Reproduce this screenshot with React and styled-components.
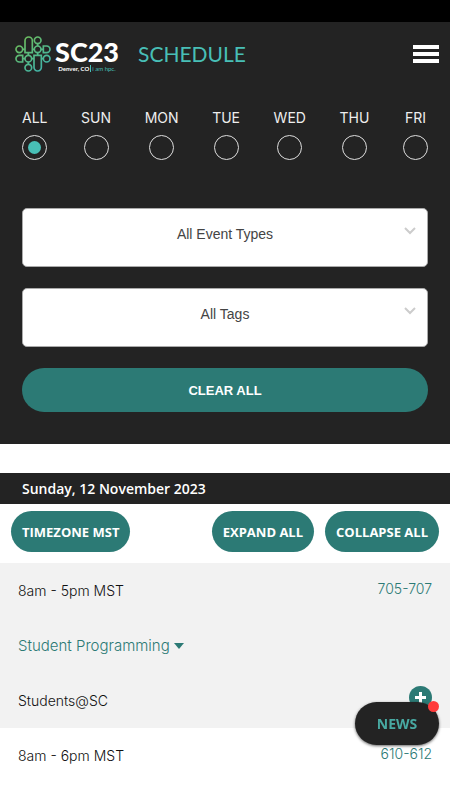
import React, { useState } from 'react';
import styled, { createGlobalStyle } from 'styled-components';

const GlobalStyle = createGlobalStyle`
  * {
    box-sizing: border-box;
  }
  body {
    margin: 0;
    background: #fff;
    color: #111;
    font-family: Inter, "Liberation Sans", sans-serif;
    font-size: 14px;
    font-weight: 300;
  }
`;

const StatusBar = styled.div`
  height: 22px;
  background: #000;
`;

const Panel = styled.div`
  background: #232323;
  padding-bottom: 32px;
`;

const Header = styled.header`
  display: flex;
  align-items: center;
  height: 64px;
  padding: 0 11px 0 15px;
`;

const Logo = styled.a`
  display: flex;
  align-items: center;
  gap: 4px;
  color: #fff;
  text-decoration: none;
`;

const LogoText = styled.span`
  display: flex;
  flex-direction: column;
  align-items: center;
  padding-top: 4px;
  font-family: Lato, sans-serif;
`;

const LogoName = styled.span`
  font-size: 27px;
  font-weight: 900;
  line-height: 26px;
`;

const LogoTag = styled.span`
  font-size: 6px;
  font-weight: 700;
  line-height: 8px;
  white-space: nowrap;
`;

const Accent = styled.span`
  margin-left: 1px;
  padding-left: 1px;
  border-left: 1px solid #48bfb6;
  color: #48bfb6;
  font-weight: 400;
`;

const Title = styled.h1`
  flex: 1;
  margin: 0 0 0 19px;
  color: #48bfb6;
  font-family: Lato, sans-serif;
  font-size: 21px;
  font-weight: 400;
  line-height: 28px;
`;

const MenuButton = styled.button`
  display: flex;
  flex-direction: column;
  gap: 3px;
  width: 26px;
  padding: 0;
  border: 0;
  background: none;
  cursor: pointer;
`;

const MenuLine = styled.span`
  height: 4px;
  background: #fff;
`;

const Filters = styled.form`
  display: flex;
  flex-direction: column;
  gap: 21px;
  padding: 22px 22px 0;
`;

const Days = styled.fieldset`
  display: flex;
  justify-content: space-between;
  margin: 0 0 27px;
  padding: 0;
  border: 0;
`;

const Day = styled.label`
  display: flex;
  flex-direction: column;
  align-items: center;
  gap: 7px;
  color: #eee;
  font-weight: 400;
  line-height: 20px;
  cursor: pointer;
`;

const Radio = styled.input`
  display: grid;
  place-items: center;
  appearance: none;
  width: 25px;
  height: 25px;
  margin: 0;
  border: 1px solid #ddd;
  border-radius: 50%;

  &:checked::before {
    content: "";
    width: 13px;
    height: 13px;
    border-radius: 50%;
    background: #48bfb6;
  }
`;

const SelectBox = styled.div`
  position: relative;
`;

const Select = styled.select`
  display: block;
  appearance: none;
  width: 100%;
  height: 59px;
  padding: 0 20px 8px;
  border: 1px solid #aaa;
  border-radius: 5px;
  background: #fff;
  color: #444;
  font-family: "Liberation Sans", sans-serif;
  font-size: 14px;
  text-align-last: center;
`;

const SelectArrow = styled.svg`
  position: absolute;
  top: 19px;
  right: 12px;
  pointer-events: none;
`;

const ClearButton = styled.button`
  height: 44px;
  border: 0;
  border-radius: 22px;
  background: #2c7a75;
  color: #fff;
  font-family: "Liberation Sans", sans-serif;
  font-size: 13px;
  font-weight: 700;
  cursor: pointer;
`;

const DateBar = styled.h2`
  margin: 29px 0 0;
  padding: 0 22px;
  background: #232323;
  color: #fff;
  font-family: "Open Sans", sans-serif;
  font-size: 14px;
  font-weight: 600;
  line-height: 31px;
`;

const Toolbar = styled.div`
  display: flex;
  gap: 11px;
  padding: 7px 11px 11px;
`;

const PillButton = styled.button`
  height: 41px;
  margin-right: ${(props) => (props.$push ? 'auto' : '0')};
  padding: 0 11px;
  border: 0;
  border-radius: 21px;
  background: #2c7a75;
  color: #fff;
  font-family: "Open Sans", sans-serif;
  font-size: 13px;
  font-weight: 700;
  white-space: nowrap;
  cursor: pointer;
`;

const Event = styled.article`
  padding: 0 18px;
  background: ${(props) => (props.$shaded ? '#f2f2f2' : '#fff')};
`;

const Line = styled.div`
  display: flex;
  align-items: center;
  justify-content: space-between;
  height: 55px;
`;

const Room = styled.a`
  padding-bottom: 4px;
  color: #2c7a75;
  text-decoration: none;
`;

const Category = styled.button`
  display: flex;
  align-items: center;
  gap: 4px;
  padding: 0;
  border: 0;
  background: none;
  color: #2c7a75;
  font: inherit;
  font-size: 15px;
  cursor: pointer;
`;

const EventName = styled.h3`
  margin: 0;
  font-size: 14px;
  font-weight: 300;
`;

const AddButton = styled.button`
  display: flex;
  align-self: flex-start;
  margin-top: 13px;
  padding: 0;
  border: 0;
  background: none;
  cursor: pointer;
`;

const NewsButton = styled.button`
  position: fixed;
  right: 11px;
  bottom: 55px;
  width: 84px;
  height: 43px;
  border: 0;
  border-radius: 22px;
  background: #232323;
  box-shadow: 0 1px 3px rgba(0, 0, 0, 0.6);
  color: #48a9a2;
  font-family: "Open Sans", sans-serif;
  font-size: 14px;
  font-weight: 700;
  cursor: pointer;
`;

const NewsDot = styled.span`
  position: absolute;
  top: -1px;
  right: 0;
  width: 11px;
  height: 11px;
  border-radius: 50%;
  background: #ff3b3b;
`;

const DAYS = ['ALL', 'SUN', 'MON', 'TUE', 'WED', 'THU', 'FRI'];

const EVENTS = [
  { time: '8am - 5pm MST', room: '705-707', category: 'Student Programming', name: 'Students@SC' },
  { time: '8am - 6pm MST', room: '610-612' },
];

function LogoMark() {
  return (
    <svg width="36" height="36" viewBox="0 0 108 108" fill="none" stroke="url(#mark)" strokeWidth="5" aria-hidden="true">
      <defs>
        <linearGradient id="mark" gradientUnits="userSpaceOnUse" x1="20" y1="10" x2="90" y2="100">
          <stop offset="0" stopColor="#6cbd5e" />
          <stop offset="1" stopColor="#3fb3ab" />
        </linearGradient>
      </defs>
      <path d="M30 50V14a11 11 0 0 1 22 0v36z" />
      <path d="M57 58h22v36a11 11 0 0 1-22 0z" />
      <circle cx="68" cy="13" r="10" />
      <circle cx="68" cy="40" r="10" />
      <circle cx="13" cy="40" r="10" />
      <circle cx="40" cy="68" r="10" />
      <circle cx="40" cy="95" r="10" />
      <circle cx="95" cy="68" r="10" />
      <path d="M85 30h10a10 10 0 0 1 0 20h-10z" />
      <path d="M23 58h-10a10 10 0 0 0 0 20h10z" />
      <path d="M23 40h7M52 40h6M78 40h7M68 23v7M68 50v8M23 68h7M50 68h7M79 68h6M40 50v8M40 78v7" />
    </svg>
  );
}

function FilterSelect({ label }) {
  return (
    <SelectBox>
      <Select aria-label={label}>
        <option>{label}</option>
      </Select>
      <SelectArrow width="12" height="8" viewBox="0 0 12 8" fill="none" stroke="#ccc" strokeWidth="2">
        <path d="M1 1l5 5 5-5" />
      </SelectArrow>
    </SelectBox>
  );
}

function App() {
  const [day, setDay] = useState('ALL');

  return (
    <>
      <GlobalStyle />
      <StatusBar />
      <Panel>
        <Header>
          <Logo href="#">
            <LogoMark />
            <LogoText>
              <LogoName>SC23</LogoName>
              <LogoTag>
                Denver, CO
                <Accent>i am hpc.</Accent>
              </LogoTag>
            </LogoText>
          </Logo>
          <Title>SCHEDULE</Title>
          <MenuButton aria-label="Menu">
            <MenuLine />
            <MenuLine />
            <MenuLine />
          </MenuButton>
        </Header>
        <Filters>
          <Days>
            {DAYS.map((name) => (
              <Day key={name}>
                {name}
                <Radio type="radio" name="day" checked={day === name} onChange={() => setDay(name)} />
              </Day>
            ))}
          </Days>
          <FilterSelect label="All Event Types" />
          <FilterSelect label="All Tags" />
          <ClearButton type="button" onClick={() => setDay('ALL')}>CLEAR ALL</ClearButton>
        </Filters>
      </Panel>
      <DateBar>Sunday, 12 November 2023</DateBar>
      <Toolbar>
        <PillButton $push>TIMEZONE MST</PillButton>
        <PillButton>EXPAND ALL</PillButton>
        <PillButton>COLLAPSE ALL</PillButton>
      </Toolbar>
      {EVENTS.map((event, i) => (
        <Event key={event.room} $shaded={i % 2 === 0}>
          <Line>
            <span>{event.time}</span>
            <Room href="#">{event.room}</Room>
          </Line>
          {event.category && (
            <Line>
              <Category>
                {event.category}
                <svg width="10" height="6" viewBox="0 0 10 6" fill="#2c7a75" aria-hidden="true">
                  <path d="M0 0h10L5 6z" />
                </svg>
              </Category>
            </Line>
          )}
          {event.name && (
            <Line>
              <EventName>{event.name}</EventName>
              <AddButton aria-label="Add to schedule">
                <svg width="23" height="23" viewBox="0 0 23 23">
                  <circle cx="11.5" cy="11.5" r="11.5" fill="#2c7a75" />
                  <path d="M11.5 6v11M6 11.5h11" stroke="#fff" strokeWidth="3" />
                </svg>
              </AddButton>
            </Line>
          )}
        </Event>
      ))}
      <NewsButton>
        NEWS
        <NewsDot />
      </NewsButton>
    </>
  );
}

export default App;
